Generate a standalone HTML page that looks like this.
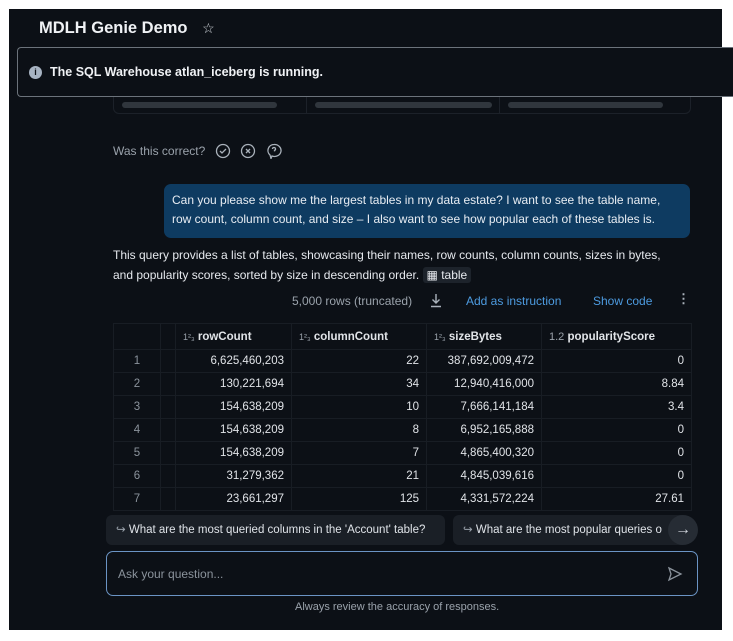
<!DOCTYPE html><html><head><style>
*{margin:0;padding:0;box-sizing:border-box}
body{width:733px;height:641px;background:#fff;position:relative;overflow:hidden;font-family:"Liberation Sans",sans-serif;}
.p{position:absolute;left:9px;top:9px;width:713px;height:621px;background:#0c1016;}
.a{position:absolute;white-space:nowrap}
.t{color:#e6e9ee;font-size:12px}
table{position:absolute;left:113px;top:323px;border-collapse:collapse;font-size:11.5px;color:#e1e4e8}
td{border:1px solid #181d24;height:23px;padding:0 7px;text-align:right}
td.i{text-align:center;color:#8b939c}
tr.h td{height:26px;font-weight:bold;text-align:left}
.s{font-size:9px;color:#9aa2ab;font-weight:normal}
</style></head><body>
<div class="p"></div>
<div class="a" style="left:39px;top:19px;color:#f0f2f5;font-size:16.5px;font-weight:bold">MDLH Genie Demo <span style="font-weight:normal;font-size:14px;margin-left:10px;color:#cdd2d8">☆</span></div>
<div class="a" style="left:113px;top:90px;width:578px;height:24px;border:1px solid #1c2129;border-radius:0 0 6px 6px"></div>
<div class="a" style="left:306px;top:90px;width:1px;height:24px;background:#1c2129"></div>
<div class="a" style="left:499px;top:90px;width:1px;height:24px;background:#1c2129"></div>
<div class="a" style="left:17px;top:47px;width:716px;height:50px;border:1px solid #6c737b;border-right:none;border-radius:4px 0 0 4px;background:#0c1016"></div>
<div class="a" style="left:29px;top:66px;width:13px;height:13px;border-radius:50%;background:#a7b3c2;color:#0c1016;font-size:9px;font-weight:bold;text-align:center;line-height:13px">i</div>
<div class="a" style="left:50px;top:65px;color:#f0f2f5;font-size:12.5px;font-weight:bold">The SQL Warehouse atlan_iceberg is running.</div>
<div class="a" style="left:122px;top:102px;width:155px;height:6px;border-radius:3px;background:#30363d"></div>
<div class="a" style="left:315px;top:102px;width:177px;height:6px;border-radius:3px;background:#30363d"></div>
<div class="a" style="left:508px;top:102px;width:155px;height:6px;border-radius:3px;background:#30363d"></div>
<svg class="a" style="left:215px;top:143px" width="70" height="16" fill="none" stroke="#aab2bb" stroke-width="1.3"><circle cx="8" cy="8" r="6.5"/><path d="M5 8l2 2 4-4"/><circle cx="33" cy="8" r="6.5"/><path d="M31 6l4 4M35 6l-4 4"/><path d="M59 1.5a6.5 6 0 1 1-2 11.5l-1 2.5-1-3.5a6 6 0 0 1 4-10.5z"/><path d="M57.5 6a1.5 1.5 0 1 1 2 1.4v1"/></svg>
<div class="a" style="left:113px;top:144px;color:#9aa2ab;font-size:12px">Was this correct?</div>
<div class="a" style="left:164px;top:184px;width:526px;height:54px;border-radius:7px;background:#0e3b61;color:#e8edf3;font-size:12px;line-height:19px;padding:7px 0 0 8px">Can you please show me the largest tables in my data estate? I want to see the table name,<br>row count, column count, and size – I also want to see how popular each of these tables is.</div>
<div class="a t" style="left:113px;top:245px;line-height:20px">This query provides a list of tables, showcasing their names, row counts, column counts, sizes in bytes,<br>and popularity scores, sorted by size in descending order. <span style="background:#1d232b;border-radius:3px;padding:1px 4px">▦ table</span></div>
<div class="a" style="left:292px;top:294px;color:#9aa2ab;font-size:12px">5,000 rows (truncated)</div>
<svg class="a" style="left:429px;top:293px" width="14" height="15" fill="none" stroke="#aab2bb" stroke-width="1.4"><path d="M7 1v9M3.5 6.5L7 10l3.5-3.5M2 13.5h10"/></svg>
<div class="a" style="left:466px;top:294px;color:#4d9be0;font-size:12px">Add as instruction</div>
<div class="a" style="left:593px;top:294px;color:#4d9be0;font-size:12px">Show code</div>
<div class="a" style="left:677px;top:291px;color:#aab2bb;font-size:13px;font-weight:bold">⋮</div>
<table>
<tr class="h"><td style="width:47px"></td><td style="width:13px"></td><td style="width:116px"><span class="s">1²₃</span> rowCount</td><td style="width:135px"><span class="s">1²₃</span> columnCount</td><td style="width:115px"><span class="s">1²₃</span> sizeBytes</td><td style="width:150px"><span class="s" style="font-size:11px">1.2</span> popularityScore</td></tr>
<tr><td class="i">1</td><td></td><td>6,625,460,203</td><td>22</td><td>387,692,009,472</td><td>0</td></tr>
<tr><td class="i">2</td><td></td><td>130,221,694</td><td>34</td><td>12,940,416,000</td><td>8.84</td></tr>
<tr><td class="i">3</td><td></td><td>154,638,209</td><td>10</td><td>7,666,141,184</td><td>3.4</td></tr>
<tr><td class="i">4</td><td></td><td>154,638,209</td><td>8</td><td>6,952,165,888</td><td>0</td></tr>
<tr><td class="i">5</td><td></td><td>154,638,209</td><td>7</td><td>4,865,400,320</td><td>0</td></tr>
<tr><td class="i">6</td><td></td><td>31,279,362</td><td>21</td><td>4,845,039,616</td><td>0</td></tr>
<tr><td class="i">7</td><td></td><td>23,661,297</td><td>125</td><td>4,331,572,224</td><td>27.61</td></tr>
</table>
<div class="a" style="left:106px;top:515px;width:339px;height:30px;border-radius:6px;background:#1a1f26;color:#dfe3e8;font-size:11.5px;line-height:30px;padding-left:10px"><span style="color:#9aa2ab">↪</span> What are the most queried columns in the 'Account' table?</div>
<div class="a" style="left:453px;top:515px;width:230px;height:30px;border-radius:6px 0 0 6px;background:#1a1f26;color:#dfe3e8;font-size:11.5px;line-height:30px;padding-left:10px;overflow:hidden"><span style="color:#9aa2ab">↪</span> What are the most popular queries o</div>
<div class="a" style="left:668px;top:515px;width:30px;height:30px;border-radius:50%;background:#262c34;color:#d0d5db;font-size:16px;text-align:center;line-height:29px">→</div>
<div class="a" style="left:106px;top:551px;width:592px;height:45px;border:1.5px solid #6b94c4;border-radius:7px;background:#0c1016"></div>
<div class="a" style="left:118px;top:567px;color:#8b939c;font-size:12px">Ask your question...</div>
<svg class="a" style="left:667px;top:566px" width="16" height="16" fill="none" stroke="#8b939c" stroke-width="1.3"><path d="M2 2l12 6-12 6 2-6z"/></svg>
<div class="a" style="left:295px;top:601px;color:#9aa2ab;font-size:11px">Always review the accuracy of responses.</div>
</body></html>
